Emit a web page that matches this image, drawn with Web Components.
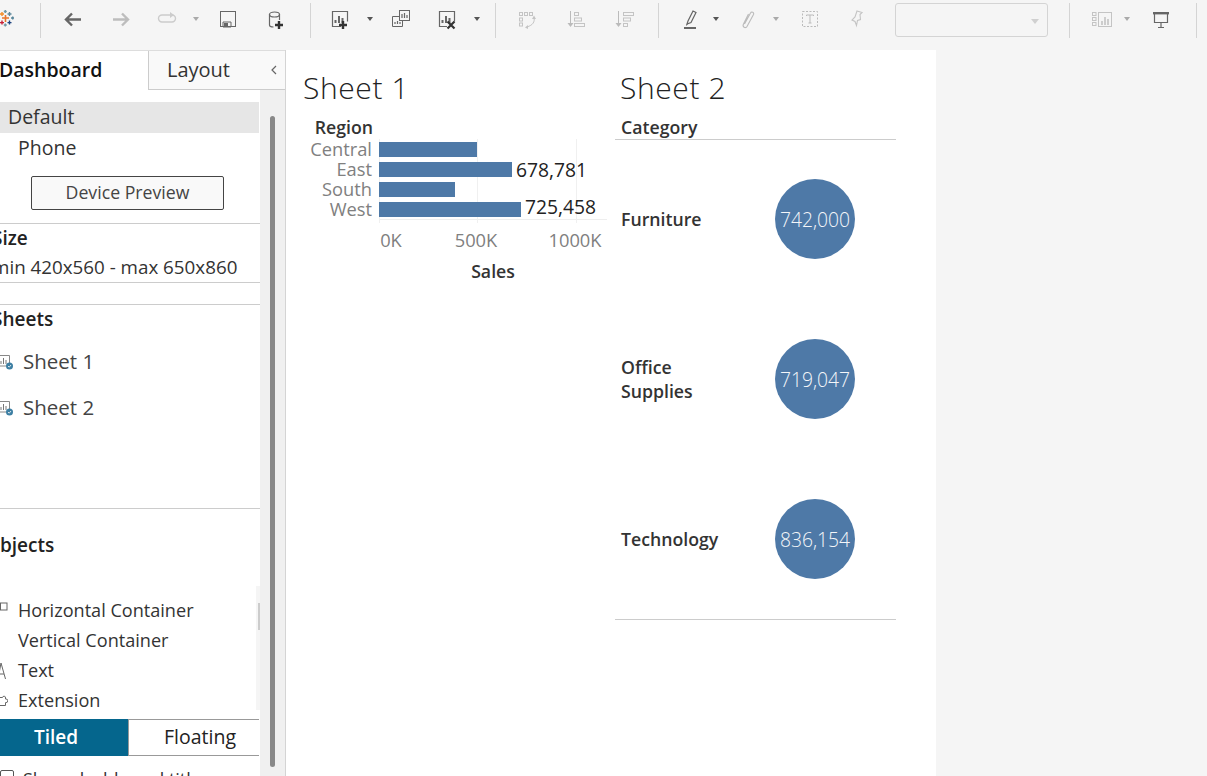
<!DOCTYPE html>
<html>
<head>
<meta charset="utf-8">
<title>Dashboard</title>
<style>
  html, body { margin: 0; height: 100%; overflow: hidden; background: #f5f5f5; }
  body { font-family: "Open Sans", "Liberation Sans", sans-serif; }
</style>
</head>
<body>
<app-shell></app-shell>

<script>
const G = '#666', L = '#bdbdbd';
const plus = (x, y, c = '#333') => `<path d="M${x - 4} ${y}h8M${x} ${y - 4}v8" stroke="${c}" stroke-width="2.4" fill="none"/>`;
const bars = (c = G) => `<path d="M7.5 16v-3M11 16v-7M14.5 16v-5" stroke="${c}" stroke-width="2" fill="none"/>`;

const ICONS = {
  logo: `<g fill="none" stroke-width="1.4">
      <path d="M2 11h7M5.5 8v7" stroke="#e8762c" stroke-width="1.6"/>
      <path d="M0 7h4M2 5v4" stroke="#f28e2b"/>
      <path d="M7.5 7h4M9.5 5v4" stroke="#5b879b"/>
      <path d="M3.8 4.5h3M5.3 3v3" stroke="#7099a6"/>
      <path d="M11 11h3M12.7 9.5v3" stroke="#59879b"/>
      <path d="M0 15.6h4M2 13.6v4" stroke="#c72037"/>
      <path d="M7.5 15.6h4M9.5 13.6v4" stroke="#1f447f"/>
      <path d="M3.8 18h3M5.3 16.5v3" stroke="#7099a6"/></g>`,
  back: `<path d="M20 12.5H5M11 6.5l-6 6 6 6" fill="none" stroke="${G}" stroke-width="2.4"/>`,
  forward: `<path d="M4 12.5h15M13 6.5l6 6-6 6" fill="none" stroke="${L}" stroke-width="2.4"/>`,
  redo: `<path d="M17 8H7a3.5 3.5 0 0 0 0 7h10a3.5 3.5 0 0 0 0-7" fill="none" stroke="#ccc" stroke-width="1.4"/><path d="M15 5l4 3-4 3z" fill="#ccc"/>`,
  caret: `<path d="M1 0h6L4 4z" fill="#aaa" transform="translate(8 10)"/>`,
  caretd: `<path d="M1 0h6L4 4z" fill="#555" transform="translate(8 10)"/>`,
  save: `<rect x="4.5" y="4.5" width="15" height="15" fill="none" stroke="${G}"/><path d="M7 20v-5h8v5z" fill="none" stroke="${G}"/><rect x="8" y="16" width="4" height="4" fill="${G}"/>`,
  data: `<path d="M6.5 7v11c0 1 1.7 2 4 2M16.5 7v6" fill="none" stroke="${G}" stroke-width="1.2"/><ellipse cx="11.5" cy="7.5" rx="5" ry="2.5" fill="none" stroke="${G}" stroke-width="1.2"/>${plus(16, 18)}`,
  newsheet: `<path d="M12 19.5H3.500v-15h15v10" fill="none" stroke="${G}" stroke-width="1.2"/><g transform="translate(-1)">${bars()}</g>${plus(14, 18)}`,
  dup: `<rect x="10.5" y="3.5" width="10" height="10" fill="#f5f5f5" stroke="${G}"/><path d="M13 11V7M15.5 11V6M18 11V8" stroke="${G}" stroke-width="1.2"/><path d="M10.5 9.5h-7v10h10v-6" fill="none" stroke="${G}"/><path d="M6 17v-2M8.5 17v-3M11 17v-2" stroke="${G}" stroke-width="1.2"/>`,
  clear: `<path d="M12 19.5H4.5v-15h15v10" fill="none" stroke="${G}" stroke-width="1.2"/>${bars()}<path d="M12.5 14.5l7 7M19.5 14.5l-7 7" stroke="#333" stroke-width="2.2"/>`,
  swap: `<g fill="none" stroke="#c4c4c4"><rect x="4.5" y="5.5" width="3" height="3"/><rect x="9.5" y="5.5" width="3" height="3"/><rect x="14.5" y="5.5" width="3" height="3"/><rect x="4.5" y="11" width="3" height="3"/><rect x="4.5" y="16" width="3" height="3"/><path d="M19 10c1 5-1 8-7 10"/></g><path d="M17 12l2-3.500 2 3.500zM13 18l-3 2.500 3 1.500z" fill="#c4c4c4"/>`,
  sortasc: `<path d="M7.5 4v14" stroke="#bbb"/><path d="M4.5 16h6l-3 4z" fill="#bbb"/><g fill="none" stroke="#c4c4c4"><rect x="11.5" y="5.5" width="4" height="3"/><rect x="11.5" y="11" width="7" height="3"/><rect x="11.5" y="16.5" width="10" height="3"/></g>`,
  sortdesc: `<path d="M6.5 4v14" stroke="#bbb"/><path d="M3.5 16h6l-3 4z" fill="#bbb"/><g fill="none" stroke="#c4c4c4"><rect x="11.5" y="5.5" width="10" height="3"/><rect x="11.5" y="11" width="7" height="3"/><rect x="11.5" y="16.5" width="4" height="3"/></g>`,
  pen: `<path d="M9 17l1-3 5-10 3 1.500-5 10z" fill="none" stroke="${G}" stroke-width="1.2"/><path d="M8.5 18.500l.8-1.500" stroke="${G}"/><rect x="6" y="20" width="12" height="2" fill="${G}"/>`,
  clip: `<path d="M8.5 17l6-11c1-2 4-.5 3 1.500l-6.500 12c-1.500 2.500-5 .5-3.500-2.500l5-10" fill="none" stroke="#bbb" stroke-width="1.1"/>`,
  textbox: `<rect x="4.5" y="4.5" width="15" height="15" fill="none" stroke="#bbb" stroke-dasharray="2 1.5"/><path d="M8.5 9V8h7v1M12 8v8M10.500 16h3" fill="none" stroke="#bbb"/>`,
  pin: `<path d="M13 4l5 1.500-2 2 .5 5-3 1-1 5-1.500-4-3-1.500 3-3z" fill="none" stroke="#c4c4c4" stroke-width="1.1"/>`,
  cards: `<g fill="none" stroke="#c4c4c4"><rect x="2.5" y="5.5" width="3.5" height="3"/><rect x="2.5" y="10.5" width="3.5" height="3"/><rect x="2.5" y="15.5" width="3.5" height="3"/><rect x="8.5" y="5.5" width="13" height="14"/></g><path d="M12 18v-4M15 18v-8M18 18v-6" stroke="#c4c4c4" stroke-width="1.6"/>`,
  present: `<rect x="4" y="5" width="16" height="2.4" fill="${G}"/><path d="M5.500 7v8.500h13V7M12 15.500V20M9 20.500h6" fill="none" stroke="${G}" stroke-width="1.2"/>`
};

// [icon, centre x] for every toolbar item, left to right
const TOOLS = [
  ['logo', 12], ['sep', 40.5], ['back', 73], ['forward', 121], ['redo', 167], ['caret', 196],
  ['save', 228], ['data', 275], ['sep', 310.5], ['newsheet', 341], ['caretd', 370], ['dup', 401],
  ['clear', 447], ['caretd', 477], ['sep', 495.5], ['swap', 527], ['sortasc', 575], ['sortdesc', 624],
  ['sep', 658.5], ['pen', 690], ['caretd', 716], ['clip', 748], ['caret', 776], ['textbox', 810],
  ['pin', 856], ['drop', 971.5], ['sep', 1069.5], ['cards', 1102], ['caret', 1127], ['present', 1161],
  ['sep', 1196.5]
];

class ToolIcon extends HTMLElement {
  connectedCallback() {
    if (this.shadowRoot) return;
    this.attachShadow({ mode: 'open' }).innerHTML = `
      <style>
        :host { display: block; width: 24px; height: 24px; flex: none; margin-top: 7px; }
        svg { display: block; overflow: visible; }
      </style>
      <svg width="24" height="24" viewBox="0 0 24 24">${ICONS[this.getAttribute('name')]}</svg>`;
  }
}
customElements.define('tool-icon', ToolIcon);

class AppToolbar extends HTMLElement {
  constructor() {
    super();
    this.attachShadow({ mode: 'open' }).innerHTML = `
      <style>
        :host { display: flex; height: 50px; flex: none; background: #f5f5f5; align-items: flex-start; overflow: hidden; }
        .sep { width: 1px; height: 35px; margin-top: 3px; background: #d4d4d4; flex: none; }
        .drop {
          width: 151px; height: 32px; margin-top: 3px; flex: none; position: relative;
          border: 1px solid #d4d4d4; border-radius: 3px;
        }
        .drop::after {
          content: ""; position: absolute; right: 8px; top: 15px;
          border: 4px solid transparent; border-top: 5px solid #d0d0d0;
        }
      </style>`;
    let right = 0;
    for (const [kind, cx] of TOOLS) {
      let el, w;
      if (kind === 'sep' || kind === 'drop') {
        el = document.createElement('div');
        el.className = kind;
        w = kind === 'sep' ? 1 : 153;
      } else {
        el = document.createElement('tool-icon');
        el.setAttribute('name', kind);
        w = 24;
      }
      const left = cx - w / 2;
      el.style.marginLeft = (left - right) + 'px';
      right = left + w;
      this.shadowRoot.appendChild(el);
    }
  }
}

class PanelTabs extends HTMLElement {
  constructor() {
    super();
    this.attachShadow({ mode: 'open' }).innerHTML = `
      <style>
        :host { display: flex; height: 40px; flex: none; box-sizing: border-box; border-top: 1px solid #ddd; font-size: 20px; color: #222; }
        .active { width: 148px; font-size: 19.5px; font-weight: 600; color: #111; display: flex; align-items: center; box-sizing: border-box; padding-bottom: 2px; text-indent: -1px; background: #fff; white-space: nowrap; }
        .other { flex: 1; display: flex; align-items: center; background: #f9f9f9; border-left: 1px solid #ccc; border-bottom: 1px solid #ccc; padding: 0 0 1px 18px; color: #333; }
        .other span { flex: 1; }
        svg { margin-right: 7px; }
      </style>
      <div class="active">Dashboard</div>
      <div class="other"><span>Layout</span>
        <svg width="8" height="10" viewBox="0 0 8 10"><path d="M6 1L2 5l4 4" fill="none" stroke="#666" stroke-width="1.2"/></svg>
      </div>`;
  }
}

class PanelRow extends HTMLElement {
  constructor() {
    super();
    this.attachShadow({ mode: 'open' }).innerHTML = `
      <style>
        :host { display: flex; align-items: center; box-sizing: border-box; padding-bottom: var(--pb, 2px); height: var(--h, 30px); font-size: var(--fs, 18px); color: #333; white-space: nowrap; position: relative; }
        ::slotted(svg) { position: absolute; left: 0; top: 50%; transform: translateY(-50%); }
      </style>
      <slot></slot>`;
  }
}

class PanelSection extends HTMLElement {
  constructor() {
    super();
    this.attachShadow({ mode: 'open' }).innerHTML = `
      <style>
        :host { display: block; border-top: 1px solid #ccc; overflow: hidden; box-sizing: border-box; }
        h3 { margin: 0 0 0 var(--shift, -8px); padding-top: var(--head-top, 0); font-size: 19px; font-weight: 600; color: #222; line-height: 28px; white-space: nowrap; }
      </style>
      <h3></h3>
      <slot></slot>`;
  }
  connectedCallback() {
    this.shadowRoot.querySelector('h3').textContent = this.getAttribute('heading');
  }
}

class SidePanel extends HTMLElement {
  constructor() {
    super();
    const sheetIcon = `<svg width="14" height="16" viewBox="0 0 14 16"><path d="M9.5 9V1.500H0M0 12h6" fill="none" stroke="#888"/><path d="M1 10V7M3.5 10V4M6 10V6" stroke="#777"/><circle cx="9.5" cy="12" r="3.5" fill="#3d7fa3"/><path d="M8 12l1.200 1.200L11 11" fill="none" stroke="#fff" stroke-width=".8"/></svg>`;
    this.attachShadow({ mode: 'open' }).innerHTML = `
      <style>
        :host { display: flex; width: 286px; flex: none; background: #f0f0f0; overflow: hidden; flex-direction: column; box-sizing: border-box; border-right: 1px solid #d4d4d4; }
        .body { flex: 1; display: flex; min-height: 0; }
        .main { width: 260px; flex: none; background: #fff; box-sizing: border-box; padding-top: 12px; overflow: hidden; position: relative; }
        .track { flex: 1; display: flex; padding-left: 10px; padding-top: 26px; }
        .thumb { width: 5px; height: 651px; background: #888; border-radius: 3px; }
        .default { background: #e6e6e6; margin-right: 1px; padding-left: 8px; --h: 31px; --fs: 19.5px; }
        .phone { padding-left: 18px; --h: 31px; --fs: 19.5px; }
        button {
          display: block; box-sizing: border-box; width: 193px; height: 34px; margin: 12px 0 13px 31px;
          background: #f9f9f9; border: 1px solid #444; border-radius: 2px;
          font: 17.7px "Open Sans", "Liberation Sans", sans-serif; color: #444; padding: 0 0 2px;
        }
        .size { height: 60px; border-bottom: 1px solid #ccc; }
        .sheets { margin-top: 21px; height: 204px; }
        .objects { height: 211px; --shift: -15px; --head-top: 22px; }
        .value { margin-left: -8px; --h: 30px; --fs: 18.8px; --pb: 0px; }
        .sheet { --h: 46px; --fs: 20.5px; padding-left: 23px; color: #444; }
        .obj { --h: 30px; --fs: 18.1px; padding-left: 18px; }
        .sheet-list { margin-top: 6px; }
        .obj-list { margin-top: 37px; }
        .mini { position: absolute; right: 0; top: 496px; width: 4px; height: 124px; background: #f5f5f5; }
        .mini::after { content: ""; display: block; width: 2px; margin: 0 0 0 2px; position: relative; top: 17px; height: 27px; background: #ccc; }
        .mode { display: flex; height: 37px; font-size: 19.5px; margin-right: 1px; }
        .mode div { display: flex; align-items: center; justify-content: center; box-sizing: border-box; padding-bottom: 2px; }
        .tiled { width: 146px; margin-left: -18px; background: #05668d; color: #fff; font-weight: 600; font-size: 19px; padding-left: 2px; }
        .floating { flex: 1; border: 1px solid #999; border-right: 0; color: #222; padding-left: 12px; }
        .check { display: flex; align-items: center; gap: 9px; height: 30px; margin-top: 8px; font-size: 18px; color: #333; white-space: nowrap; }
        .check i { display: block; width: 12px; height: 12px; border: 1px solid #555; border-radius: 2px; flex: none; margin-top: -4px; }
      </style>
      <panel-tabs></panel-tabs>
      <div class="body">
        <div class="main">
          <panel-row class="default">Default</panel-row>
          <panel-row class="phone">Phone</panel-row>
          <button>Device Preview</button>
          <panel-section class="size" heading="Size">
            <panel-row class="value">min 420x560 - max 650x860</panel-row>
          </panel-section>
          <panel-section class="sheets" heading="Sheets">
            <div class="sheet-list">
              <panel-row class="sheet">${sheetIcon}Sheet 1</panel-row>
              <panel-row class="sheet">${sheetIcon}Sheet 2</panel-row>
            </div>
          </panel-section>
          <panel-section class="objects" heading="Objects">
            <div class="obj-list">
              <panel-row class="obj"><svg width="8" height="10" viewBox="0 0 8 10" style="margin-top:-4px"><rect x="0.5" y="1" width="6.5" height="7" fill="none" stroke="#666"/></svg>Horizontal Container</panel-row>
              <panel-row class="obj">Vertical Container</panel-row>
              <panel-row class="obj"><svg width="6" height="18" viewBox="0 0 6 18"><path d="M-2 17L1 1l4.500 16M-1 12h5" fill="none" stroke="#666"/></svg>Text</panel-row>
              <panel-row class="obj"><svg width="8" height="12" viewBox="0 0 8 12"><path d="M0 2.500h2.500a1.500 1.500 0 0 1 3 .5v1h.5a1.800 1.800 0 0 1 0 3.600h-.5v2.900H0" fill="none" stroke="#666"/></svg>Extension</panel-row>
            </div>
          </panel-section>
          <div class="mini"></div>
          <div class="mode"><div class="tiled">Tiled</div><div class="floating">Floating</div></div>
          <div class="check"><i></i><span>Show dashboard title</span></div>
        </div>
        <div class="track"><div class="thumb"></div></div>
      </div>`;
  }
}

class SheetTitle extends HTMLElement {
  constructor() {
    super();
    this.attachShadow({ mode: 'open' }).innerHTML = `
      <style>
        :host { display: block; font-size: 30px; letter-spacing: .6px; font-weight: 300; color: #222; line-height: 38px; height: 49px; padding-top: 19px; }
      </style>
      <slot></slot>`;
  }
}

class RegionBars extends HTMLElement {
  constructor() {
    super();
    const data = [['Central', 98, ''], ['East', 133, '678,781'], ['South', 76, ''], ['West', 142, '725,458']];
    const rows = data.map(([name, w, val]) => `
      <div class="label">${name}</div>
      <div class="bar-row"><div class="bar" style="width:${w}px"></div>${val ? `<span class="val ${name}">${val}</span>` : ''}</div>`).join('');
    this.attachShadow({ mode: 'open' }).innerHTML = `
      <style>
        :host { display: block; width: 329px; flex: none; box-sizing: border-box; padding-left: 17px; }
        .head { width: 76px; font-weight: 600; font-size: 17.7px; color: #333; line-height: 18px; text-align: right; padding-right: 6px; height: 22px; box-sizing: border-box; }
        .plot { display: grid; grid-template-columns: 76px 228px; grid-auto-rows: 20px; position: relative; }
        .label { text-align: right; padding-right: 7px; font-size: 18.3px; line-height: 18px; color: #808080; }
        .bar-row { display: flex; align-items: center; gap: 4px; height: 20px; position: relative; z-index: 1; }
        .bar { height: 15px; background: #4e79a7; margin-top: -1px; }
        .val { font-size: 19.3px; color: #222; line-height: 20px; }
        .val.West { margin-top: -6px; }
        .grid { position: absolute; left: 76px; top: -1px; width: 228px; height: 80px; border-bottom: 1px solid #eee; }
        .grid b { position: absolute; top: 0; width: 1px; height: 84px; background: #f0f0f0; }
        .ticks { display: flex; margin-left: 76px; height: 40px; box-sizing: border-box; padding-bottom: 2px; align-items: center; font-size: 18.3px; color: #808080; text-align: center; }
        .ticks span:nth-child(1) { width: 24px; }
        .ticks span:nth-child(2) { width: 100px; margin-left: 23px; }
        .ticks span:nth-child(3) { width: 60px; margin-left: 19px; }
        .axis { margin-left: 76px; width: 228px; text-align: center; font-weight: 600; font-size: 17.7px; color: #333; line-height: 22px; height: 24px; }
      </style>
      <sheet-title>Sheet 1</sheet-title>
      <div class="head">Region</div>
      <div class="plot">
        <div class="grid"><b style="left:0"></b><b style="left:98px"></b><b style="left:197px"></b></div>
        ${rows}
      </div>
      <div class="ticks"><span>0K</span><span>500K</span><span>1000K</span></div>
      <div class="axis">Sales</div>`;
  }
}

class CategoryCircles extends HTMLElement {
  constructor() {
    super();
    const data = [['Furniture', '742,000'], ['Office<br>Supplies', '719,047'], ['Technology', '836,154']];
    this.attachShadow({ mode: 'open' }).innerHTML = `
      <style>
        :host { display: block; width: 281px; flex: none; }
        sheet-title { padding-left: 5px; }
        .head { font-weight: 600; font-size: 17.7px; color: #333; line-height: 18px; height: 22px; box-sizing: border-box; padding-left: 6px; border-bottom: 1px solid #ccc; }
        .row { display: flex; align-items: center; height: 160px; }
        .row:last-child { box-shadow: inset 0 -1px #ccc; }
        .name { width: 160px; padding: 0 0 2px 6px; box-sizing: border-box; font-size: 17.7px; font-weight: 600; color: #333; line-height: 24px; }
        .dot { width: 80px; height: 80px; margin-bottom: 2px; padding-top: 0; box-sizing: border-box; border-radius: 50%; background: #4e79a7; color: #f4f6f9; display: flex; align-items: center; justify-content: center; font-size: 19.3px; font-weight: 300; }
      </style>
      <sheet-title>Sheet 2</sheet-title>
      <div class="head">Category</div>
      ${data.map(([n, v]) => `<div class="row"><div class="name">${n}</div><div class="dot">${v}</div></div>`).join('')}`;
  }
}

class AppShell extends HTMLElement {
  constructor() {
    super();
    this.attachShadow({ mode: 'open' }).innerHTML = `
      <style>
        :host { display: flex; flex-direction: column; width: 1207px; height: 776px; overflow: hidden; }
        .body { flex: 1; display: flex; min-height: 0; }
        .board { width: 650px; flex: none; background: #fff; display: flex; overflow: hidden; }
      </style>
      <app-toolbar></app-toolbar>
      <div class="body">
        <side-panel></side-panel>
        <div class="board">
          <region-bars></region-bars>
          <category-circles></category-circles>
        </div>
      </div>`;
  }
}

customElements.define('app-toolbar', AppToolbar);
customElements.define('panel-tabs', PanelTabs);
customElements.define('panel-row', PanelRow);
customElements.define('panel-section', PanelSection);
customElements.define('side-panel', SidePanel);
customElements.define('sheet-title', SheetTitle);
customElements.define('region-bars', RegionBars);
customElements.define('category-circles', CategoryCircles);
customElements.define('app-shell', AppShell);
</script>
</body>
</html>
